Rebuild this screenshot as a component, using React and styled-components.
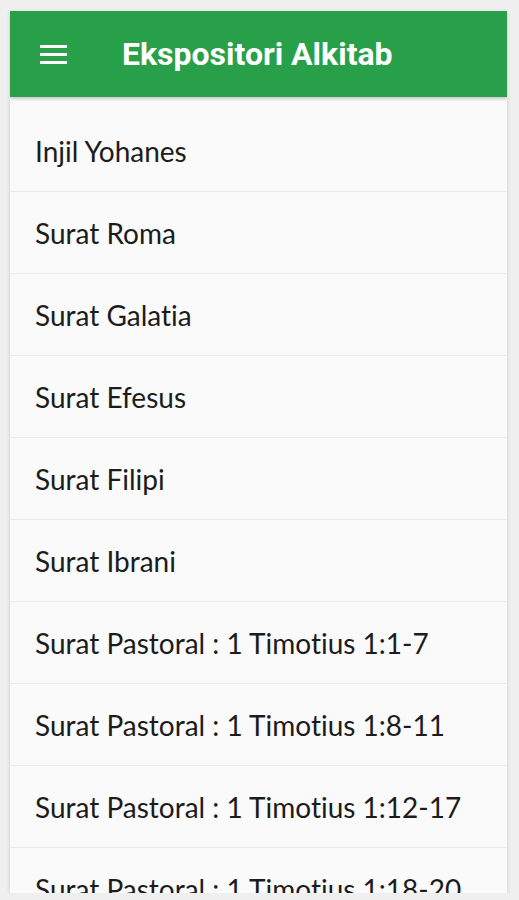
import React from "react";
import styled, { createGlobalStyle } from "styled-components";

const GlobalStyle = createGlobalStyle`
  body {
    margin: 0;
    background: #efefef;
    font-family: "Lato", "Noto Sans", sans-serif;
    font-variant-ligatures: none;
  }
`;

const books = [
  "Injil Yohanes",
  "Surat Roma",
  "Surat Galatia",
  "Surat Efesus",
  "Surat Filipi",
  "Surat Ibrani",
  "Surat Pastoral : 1 Timotius 1:1-7",
  "Surat Pastoral : 1 Timotius 1:8-11",
  "Surat Pastoral : 1 Timotius 1:12-17",
  "Surat Pastoral : 1 Timotius 1:18-20",
];

export default function App() {
  return (
    <>
      <GlobalStyle />
      <Frame>
        <Header>
          <MenuButton aria-label="menu">
            <svg width="27" height="19" viewBox="0 0 27 19">
              <rect x="0" y="0" width="27" height="3" fill="#fff" />
              <rect x="0" y="8" width="27" height="3" fill="#fff" />
              <rect x="0" y="16" width="27" height="3" fill="#fff" />
            </svg>
          </MenuButton>
          <Title>Ekspositori Alkitab</Title>
        </Header>
        <List>
          {books.map((b) => (
            <Row key={b}>{b}</Row>
          ))}
        </List>
      </Frame>
    </>
  );
}

const Frame = styled.div`
  margin: 11px 12px 0 10px;
  height: 882px;
  overflow: hidden;
  background: #fafafa;
  box-shadow: 0 1px 4px rgba(0, 0, 0, 0.15);
`;

const Header = styled.header`
  display: flex;
  align-items: center;
  height: 86px;
  padding-left: 30px;
  background: #28a04a;
  box-shadow: 0 2px 3px rgba(0, 0, 0, 0.2);
  position: relative;
  z-index: 1;
`;

const MenuButton = styled.div`
  display: flex;
  width: 27px;
  height: 19px;
  margin-right: 55px;
`;

const Title = styled.h1`
  margin: 0;
  color: #fff;
  font-family: "Roboto", "Liberation Sans", sans-serif;
  font-weight: 700;
  font-size: 32px;
`;

const List = styled.ul`
  list-style: none;
  margin: 0;
  padding: 13px 0 0;
`;

const Row = styled.li`
  display: flex;
  align-items: center;
  height: 82px;
  padding-left: 25px;
  border-bottom: 1px solid #ececec;
  box-sizing: border-box;
  white-space: nowrap;
  font-size: 28px;
  color: #1c1c1c;
`;
